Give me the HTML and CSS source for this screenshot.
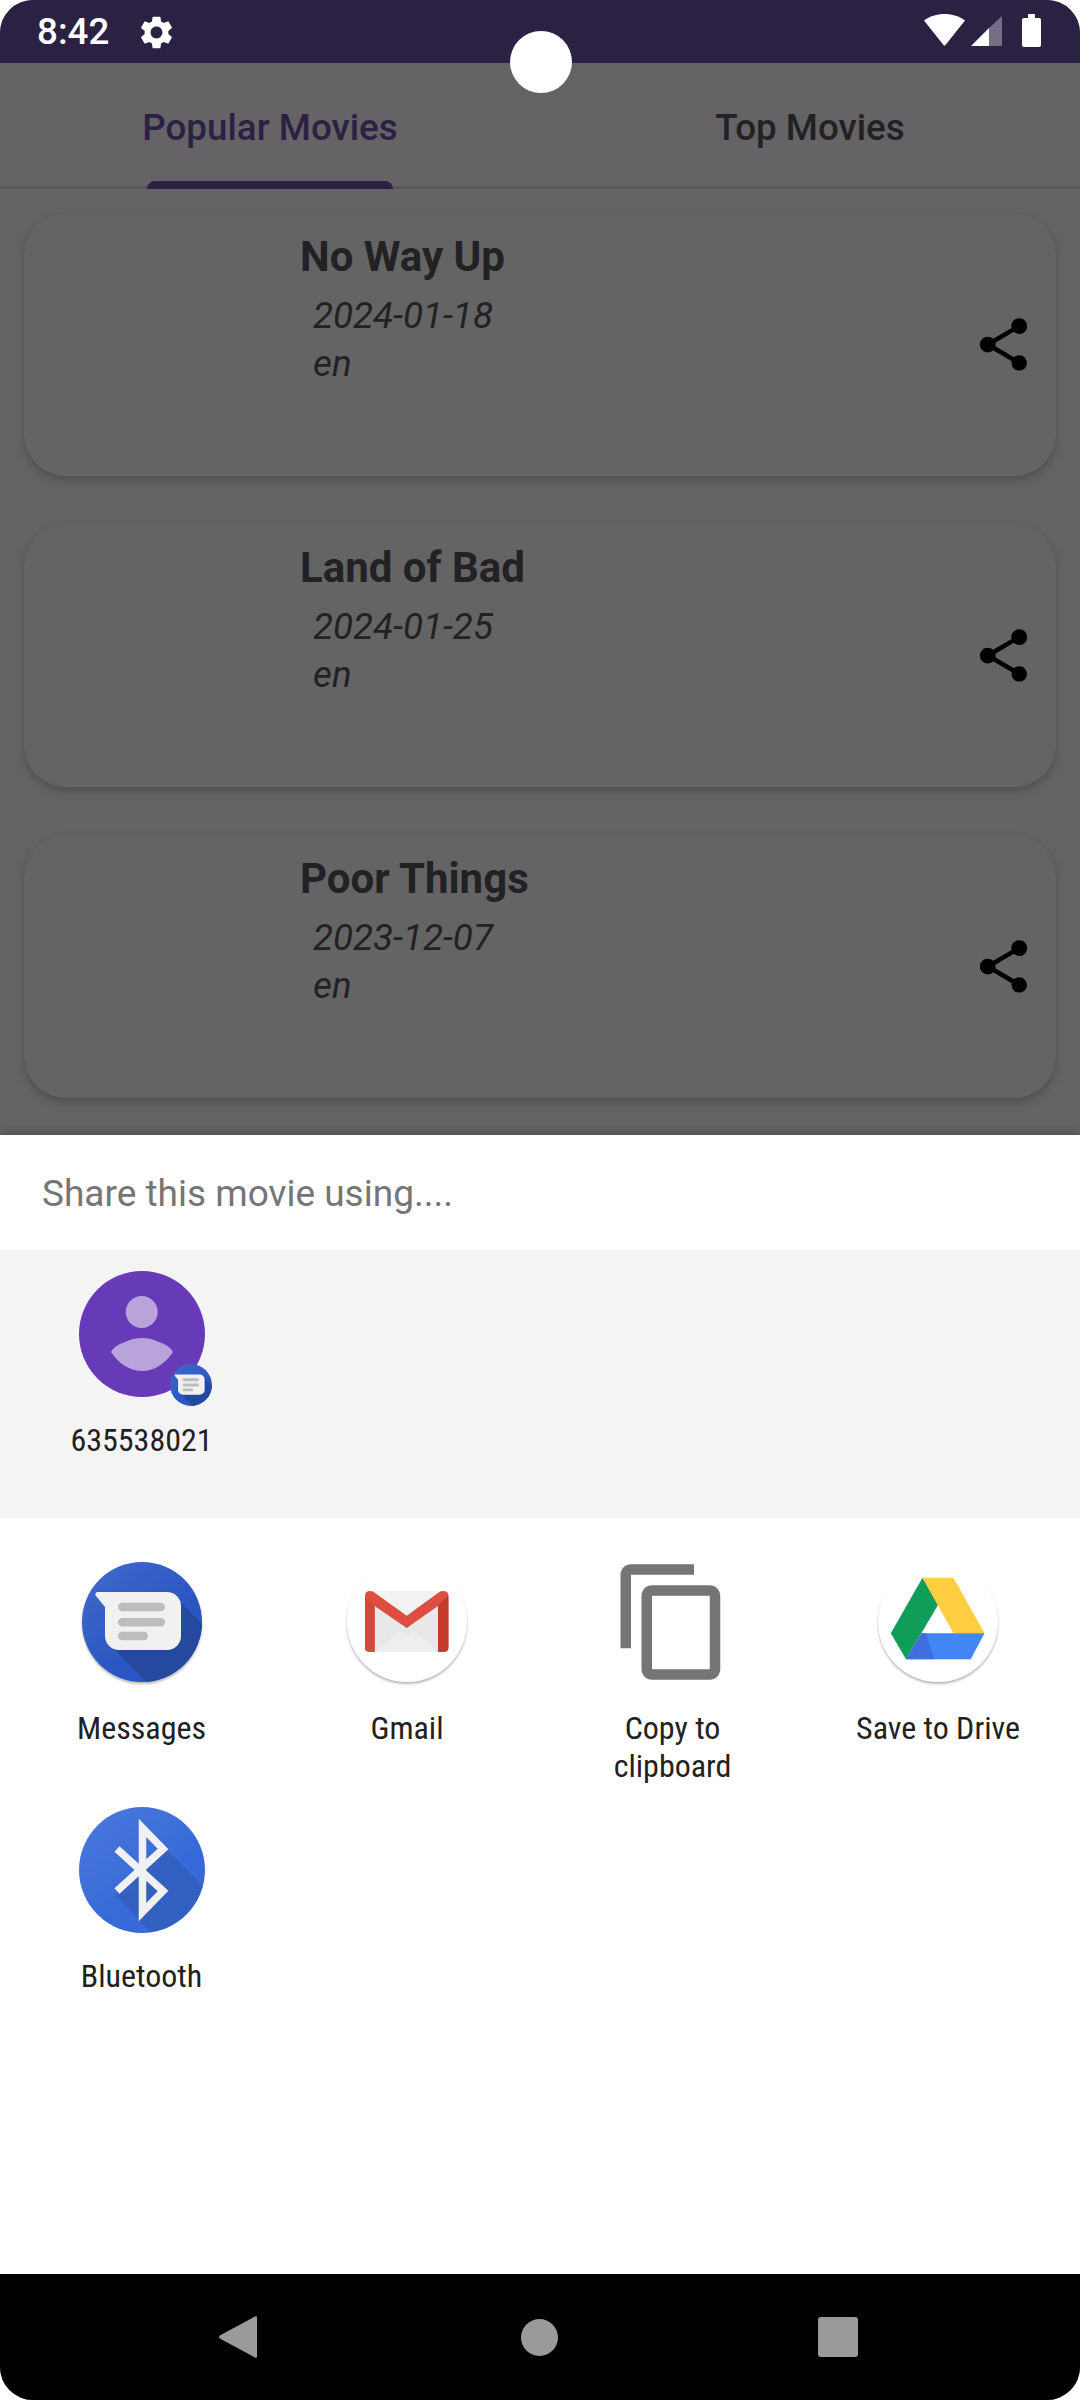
FILE: index.html
```html
<!DOCTYPE html>
<html lang="en">
<head>
<meta charset="UTF-8" />
<meta name="viewport" content="width=device-width, initial-scale=1" />
<title>Popular Movies</title>
<link rel="stylesheet" href="styles.css">
</head>

<body>

<svg class="defs" width="0" height="0">
  <defs>
    <clipPath id="clipMsg"><circle cx="63" cy="63" r="60" /></clipPath>
    <clipPath id="clipBt"><circle cx="63" cy="63" r="63" /></clipPath>
    <linearGradient id="gradMsg" x1="0.1" y1="0" x2="0.6" y2="0.6">
      <stop offset="0" stop-color="#4169cb" />
      <stop offset="1" stop-color="#2b55c2" />
    </linearGradient>
    <linearGradient id="gradBt" x1="0.1" y1="0" x2="0.6" y2="0.6">
      <stop offset="0" stop-color="#4a79dc" />
      <stop offset="1" stop-color="#376ad8" />
    </linearGradient>
    <symbol id="share" viewBox="0 0 24 24">
      <path d="M18 16.08c-.76 0-1.44.3-1.96.77L8.91 12.7c.05-.23.09-.46.09-.7s-.04-.47-.09-.7l7.05-4.11c.54.5 1.25.81 2.04.81 1.66 0 3-1.34 3-3s-1.34-3-3-3-3 1.34-3 3c0 .24.04.47.09.7L8.04 9.81C7.5 9.31 6.79 9 6 9c-1.66 0-3 1.34-3 3s1.34 3 3 3c.79 0 1.5-.31 2.04-.81l7.12 4.16c-.05.21-.08.43-.08.65 0 1.61 1.31 2.92 2.92 2.92s2.92-1.31 2.92-2.92-1.31-2.92-2.92-2.92z" />
    </symbol>
    <symbol id="messages" viewBox="0 0 126 126">
      <circle cx="63" cy="63" r="60" fill="url(#gradMsg)" />
      <polygon points="101,43 156,98 111,166 33,88" fill="#25499f" clip-path="url(#clipMsg)" />
      <path d="M18 33H88a14 14 0 0 1 14 14V77a14 14 0 0 1-14 14H40a14 14 0 0 1-14-14V48L17 37a2.500 2.500 0 0 1 1-4z" fill="#f1f1f1" />
      <rect x="39" y="43.700" width="47" height="8.500" rx="4.200" fill="#bdbdbd" />
      <rect x="39" y="59" width="47" height="8.500" rx="4.200" fill="#bdbdbd" />
      <rect x="39" y="72.700" width="30" height="8.500" rx="4.200" fill="#bdbdbd" />
    </symbol>
  </defs>
</svg>

<div class="phone">

  <div class="statusbar">
    <span class="clock">8:42</span>
    <svg class="gear" viewBox="2.500 2 19 20">
      <path d="M19.14 12.94c.04-.3.06-.61.06-.94 0-.32-.02-.64-.07-.94l2.03-1.58c.18-.14.23-.41.12-.61l-1.92-3.32c-.12-.22-.37-.29-.59-.22l-2.39.96c-.5-.38-1.03-.7-1.62-.94l-.36-2.54c-.04-.24-.24-.41-.48-.41h-3.84c-.24 0-.43.17-.47.41l-.36 2.54c-.59.24-1.13.57-1.62.94l-2.39-.96c-.22-.08-.47 0-.59.22L2.74 8.870c-.12.21-.08.47.12.61l2.03 1.58c-.05.3-.09.63-.09.94s.02.64.07.94l-2.03 1.58c-.18.14-.23.41-.12.61l1.92 3.32c.12.22.37.29.59.22l2.39-.96c.5.38 1.03.7 1.62.94l.36 2.54c.05.24.24.41.48.41h3.84c.24 0 .44-.17.47-.41l.36-2.54c.59-.24 1.13-.56 1.62-.94l2.39.96c.22.08.47 0 .59-.22l1.92-3.32c.12-.22.07-.47-.12-.61l-2.01-1.58zM12 15.600c-1.98 0-3.600-1.62-3.600-3.600s1.620-3.600 3.600-3.600 3.600 1.620 3.600 3.600-1.620 3.600-3.600 3.600z" fill="#fff" />
    </svg>
    <div class="status-right">
      <svg class="wifi" viewBox="0 0 41 32">
        <path d="M0 6.500C5.500 2.300 12.800 0 20.500 0S35.500 2.300 41 6.500L21.500 31a1.300 1.300 0 0 1-2 0z" fill="#fff" />
      </svg>
      <svg class="signal" viewBox="0 0 31 30">
        <path d="M0 30 18 12V30z" fill="#fff" />
        <path d="M18 12 31 0V29a1 1 0 0 1-1 1H18z" fill="#fff" fill-opacity=".35" />
      </svg>
      <svg class="battery" viewBox="0 0 19 33">
        <path d="M6 0h7v4h4a2 2 0 0 1 2 2v25a2 2 0 0 1-2 2H2a2 2 0 0 1-2-2V6a2 2 0 0 1 2-2h4z" fill="#fff" />
      </svg>
    </div>
  </div>

  <div class="tabs">
    <div class="tab active">Popular Movies<span class="indicator"></span></div>
    <div class="tab">Top Movies</div>
  </div>

  <div class="list">
    <div class="card">
      <div class="card-text">
        <div class="movie-title">No Way Up</div>
        <div class="movie-meta">2024-01-18</div>
        <div class="movie-meta">en</div>
      </div>
      <svg class="share-btn"><use href="#share" /></svg>
    </div>
    <div class="card">
      <div class="card-text">
        <div class="movie-title">Land of Bad</div>
        <div class="movie-meta">2024-01-25</div>
        <div class="movie-meta">en</div>
      </div>
      <svg class="share-btn"><use href="#share" /></svg>
    </div>
    <div class="card">
      <div class="card-text">
        <div class="movie-title">Poor Things</div>
        <div class="movie-meta">2023-12-07</div>
        <div class="movie-meta">en</div>
      </div>
      <svg class="share-btn"><use href="#share" /></svg>
    </div>
  </div>

  <div class="sheet">
    <div class="sheet-title">Share this movie using....</div>

    <div class="direct">
      <div class="cell">
        <div class="icon-wrap">
          <svg class="icon" viewBox="0 0 126 126">
            <circle cx="63" cy="63" r="63" fill="#673ab7" />
            <circle cx="62.700" cy="41" r="16" fill="#b9a3db" />
            <path d="M32 81Q36 74 46 71 54 67 63 67 72 67 80 71 90 74 94 81 88 90 80 95 72 100 63 100 54 100 46 95 38 90 32 81z" fill="#b9a3db" />
          </svg>
          <svg class="badge"><use href="#messages" /></svg>
        </div>
        <div class="label">635538021</div>
      </div>
    </div>

    <div class="apps">
      <div class="cell">
        <svg class="icon raised"><use href="#messages" /></svg>
        <div class="label">Messages</div>
      </div>
      <div class="cell">
        <svg class="icon raised" viewBox="0 0 126 126">
          <circle cx="63" cy="63" r="60" fill="#fff" />
          <rect x="24" y="32" width="78" height="60.700" fill="#e8e8e8" />
          <path d="M24 32H102L62.700 62z" fill="#f2f2f2" />
          <path d="M31 92.700 56 72l7 4 7-4 24 20.700z" fill="#eeeeee" />
          <path d="M21 37Q21 32 26 32 29 32 31 34L62.700 56.700 94 34Q96 32 99 32 104.400 32 104.400 37V89Q104.400 92.700 100 92.700H94V47L62.700 69 30.600 47V92.700H25Q21 92.700 21 89z" fill="#dd4e40" />
          <path d="M94 47 104.400 36V89Q104.400 92.700 100 92.700H94z" fill="#c43a2b" />
          <path d="M21 38 30.600 47V92.700H25Q21 92.700 21 89z" fill="#d4483b" />
        </svg>
        <div class="label">Gmail</div>
      </div>
      <div class="cell">
        <svg class="icon" viewBox="0 0 24 24">
          <path d="M16 1H4c-1.100 0-2 .9-2 2v14h2V3h12V1zm3 4H8c-1.100 0-2 .9-2 2v14c0 1.100.9 2 2 2h11c1.100 0 2-.9 2-2V7c0-1.100-.9-2-2-2zm0 16H8V7h11v14z" fill="#757575" />
        </svg>
        <div class="label">Copy to clipboard</div>
      </div>
      <div class="cell">
        <svg class="icon raised" viewBox="0 0 126 126">
          <circle cx="63" cy="63" r="60" fill="#fff" />
          <polygon points="47.500,18.700 63,46 31,100.300 15.800,74.300" fill="#0f9d58" />
          <polygon points="47.500,18.700 78.500,18.700 109.500,74.300 78.500,74.300" fill="#ffcd40" />
          <polygon points="46.500,74.300 109.500,74.300 95.700,100.300 31,100.300" fill="#4285f4" />
          <polygon points="46.500,74.300 51,74.300 59.600,100.300 31,100.300" fill="#3f6fdc" />
        </svg>
        <div class="label">Save to Drive</div>
      </div>
      <div class="cell">
        <svg class="icon" viewBox="0 0 126 126">
          <circle cx="63" cy="63" r="63" fill="url(#gradBt)" />
          <polygon points="88,43 140,95 90,145 37,88" fill="#000" fill-opacity=".1" clip-path="url(#clipBt)" />
          <path d="M38 42 84 84 63.500 105V21L84 42 38 84" fill="none" stroke="#f1f1f1" stroke-width="7.500" />
        </svg>
        <div class="label">Bluetooth</div>
      </div>
    </div>
  </div>

  <div class="navbar">
    <svg class="nav-back" viewBox="0 0 38 42">
      <path d="M36 .5a1.200 1.200 0 0 1 2 .8v39.400a1.200 1.200 0 0 1-2 .8L.8 22.500a2.300 2.300 0 0 1 0-3z" fill="#9a9a9a" />
    </svg>
    <span class="nav-home"></span>
    <span class="nav-square"></span>
  </div>

  <span class="touch-dot"></span>
</div>

</body>
</html>
```

FILE: styles.css
```css
* {
  box-sizing: border-box;
}
body {
  margin: 0;
  background: #fff;
  font-family: Roboto, "Noto Sans", sans-serif;
}
.defs {
  position: absolute;
}
.phone {
  position: relative;
  width: 1080px;
  height: 2400px;
  border-radius: 33px;
  overflow: hidden;
  display: flex;
  flex-direction: column;
  background: #656365;
}

/* status bar */
.statusbar {
  height: 63px;
  flex: none;
  background: #2b2143;
  display: flex;
  align-items: center;
  padding: 0 39px 0 37px;
  color: #fff;
}
.clock {
  font-size: 36.750px;
  font-weight: 500;
  line-height: 65px;
}
.gear {
  width: 33px;
  height: 33px;
  margin-left: 31px;
  margin-top: 1px;
}
.status-right {
  margin-left: auto;
  display: flex;
  align-items: flex-end;
  height: 33px;
  margin-bottom: 2px;
}
.wifi {
  width: 41px;
  height: 32px;
  margin-bottom: 1px;
}
.signal {
  width: 31px;
  height: 30px;
  margin-left: 6px;
  margin-bottom: 1px;
}
.battery {
  width: 19px;
  height: 33px;
  margin-left: 20px;
}

/* tabs */
.tabs {
  height: 126px;
  flex: none;
  display: grid;
  grid-template-columns: 1fr 1fr;
  border-bottom: 3px solid #59575a;
}
.tab {
  position: relative;
  text-align: center;
  font-size: 36.750px;
  font-weight: 500;
  line-height: 129px;
  height: 123px;
  color: #222124;
}
.tab.active {
  color: #2b2143;
}
.indicator {
  position: absolute;
  left: 147px;
  bottom: -3px;
  width: 246px;
  height: 8px;
  background: #2b2143;
  border-radius: 8px 8px 0 0;
}

/* movie cards */
.list {
  height: 946px;
  flex: none;
  overflow: hidden;
  padding: 24px 24px 0;
  display: flex;
  flex-direction: column;
  gap: 48px;
}
.card {
  height: 263px;
  flex: none;
  background: #646464;
  border-radius: 42px;
  box-shadow: 0 4px 10px rgba(0, 0, 0, .22);
  display: flex;
  align-items: center;
  padding: 0 21px 0 276px;
  color: #222124;
}
.card-text {
  align-self: flex-start;
  padding-top: 19px;
}
.movie-title {
  font-size: 42px;
  font-weight: 700;
  line-height: 49px;
  margin-bottom: 11px;
}
.movie-meta {
  font-size: 36.750px;
  font-style: italic;
  line-height: 48px;
  margin-left: 13px;
}
.share-btn {
  width: 63px;
  height: 63px;
  margin-left: auto;
  fill: #000;
}

/* share sheet */
.sheet {
  height: 1139px;
  flex: none;
  background: #fff;
  box-shadow: 0 -3px 8px rgba(0, 0, 0, .18);
  position: relative;
}
.sheet-title {
  height: 115px;
  padding-left: 42px;
  font-size: 37px;
  line-height: 118px;
  color: #757575;
}
.direct {
  height: 268px;
  background: #f4f4f4;
  padding: 21px 9px 0;
}
.apps {
  padding: 41px 9px 0;
  display: grid;
  grid-template-columns: repeat(4, 265.500px);
  row-gap: 22px;
}
.cell {
  width: 265px;
  display: flex;
  flex-direction: column;
  align-items: center;
}
.icon-wrap {
  position: relative;
  width: 126px;
  height: 126px;
}
.icon {
  display: block;
  width: 126px;
  height: 126px;
}
.raised {
  filter: drop-shadow(0 2px 1px rgba(0, 0, 0, .28));
}
.badge {
  position: absolute;
  left: 90px;
  bottom: -10px;
  width: 44px;
  height: 44px;
}
.label {
  margin-top: 24px;
  width: 200px;
  text-align: center;
  font-size: 32px;
  font-stretch: 75%;
  line-height: 38px;
  color: #212121;
}

/* navigation bar */
.navbar {
  height: 126px;
  flex: none;
  background: #000;
  position: relative;
  display: grid;
  grid-template-columns: 219px 38px 264px 37px 260px 40px;
  align-items: center;
}
.nav-back {
  grid-column: 2;
  width: 38px;
  height: 42px;
}
.nav-home {
  grid-column: 4;
  width: 37px;
  height: 37px;
  border-radius: 50%;
  background: #9a9a9a;
}
.nav-square {
  grid-column: 6;
  width: 40px;
  height: 40px;
  border-radius: 3px;
  background: #9a9a9a;
}

/* touch indicator from the screen recording */
.touch-dot {
  position: absolute;
  left: 510px;
  top: 31px;
  width: 62px;
  height: 62px;
  border-radius: 50%;
  background: #fff;
}
```
